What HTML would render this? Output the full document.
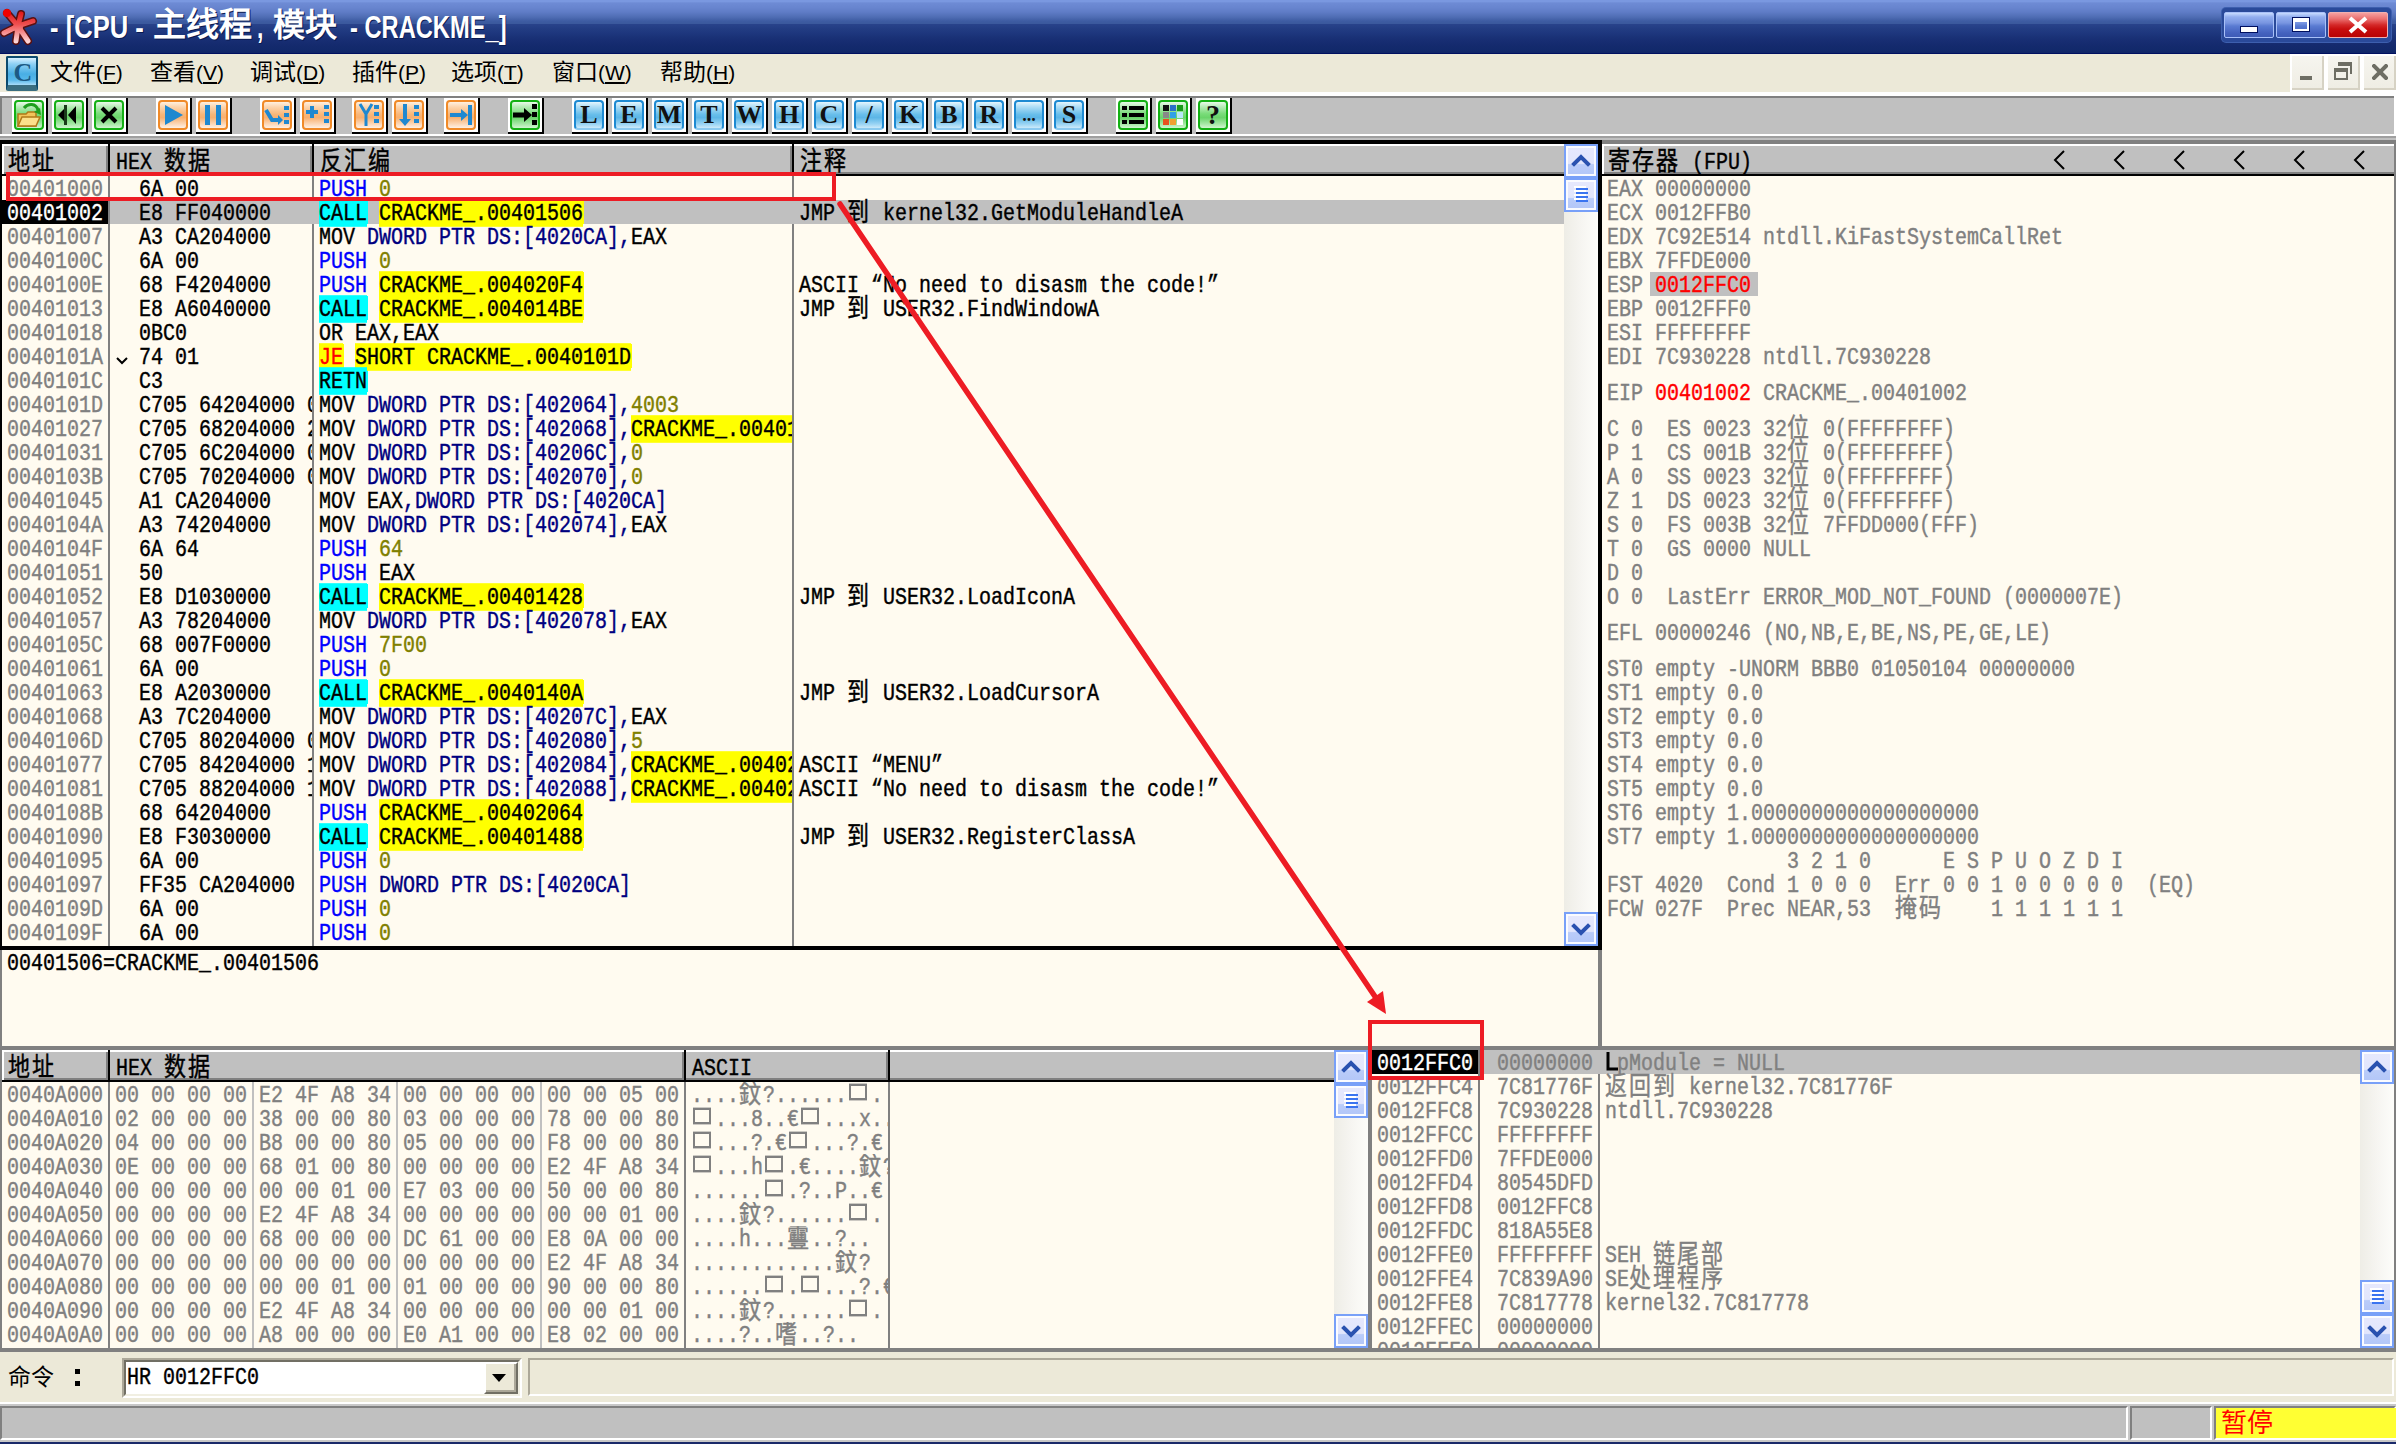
<!DOCTYPE html><html lang="zh-CN"><head><meta charset="utf-8"><title>OllyDbg CPU</title><style>
html,body{margin:0;padding:0}
body{width:2396px;height:1444px;overflow:hidden;position:relative;background:#ECE9D8;font-family:"Liberation Sans",sans-serif}
body div{position:absolute;box-sizing:border-box}
svg{display:block}
.t{font-family:"Liberation Mono",monospace;-webkit-text-stroke:0.35px currentColor;font-size:20px;line-height:24px;height:24px;white-space:pre;transform:scaleY(1.2);transform-origin:0 4px;color:#000;margin-left:-1px}
.c{font-size:22px;letter-spacing:2px;position:relative;top:1px}
.clip{overflow:hidden}
.sq{display:inline-block;width:18px;height:14px;border:2px solid currentColor;box-sizing:border-box;margin:2px 4px 0 2px;vertical-align:top}
.ui{font-family:"Liberation Sans",sans-serif;white-space:pre}
</style></head><body><div style="left:0px;top:0px;width:2396px;height:54px;background:linear-gradient(to bottom,#7A98E0 0px,#7A98E0 1.5px,#6E8BD5 3px,#6784CE 8px,#5F7CC6 12px,#4F6DB4 17px,#3E5CA2 21px,#3A589C 24px,#28428A 24.5px,#223C82 29px,#1E377E 33px,#1A3277 37px,#172D72 41px,#142A6D 46px,#12296B 50px,#102668 52.5px,#001060 53px,#001060 54px)"></div><div style="left:0px;top:0px;width:40px;height:50px"><svg width="40" height="50" viewBox="0 0 40 50">
<defs><linearGradient id="sg" gradientUnits="userSpaceOnUse" x1="0" y1="10" x2="0" y2="42"><stop offset="0" stop-color="#E01010"/><stop offset="0.45" stop-color="#F05050"/><stop offset="1" stop-color="#FFD8D8"/></linearGradient></defs>
<g stroke-linecap="round" fill="none">
<path d="M7 13 L18 26 M21 14 L18 26 M33 21 L18 26 M4 33 L18 26 M16 41 L18 26 M28 41 L18 26" stroke="#5A1010" stroke-width="8"/>
<path d="M7 13 L18 26 M21 14 L18 26 M33 21 L18 26 M4 33 L18 26 M16 41 L18 26 M28 41 L18 26" stroke="url(#sg)" stroke-width="5"/>
<circle cx="18" cy="27" r="5" fill="url(#sg)"/>
<circle cx="7" cy="13" r="4" fill="#F00000"/>
</g></svg></div><div class="ui" style="left:50px;top:7px;width:100px;height:40px"><span style="position:absolute;top:0;height:40px;line-height:40px;font-weight:bold;color:#fff;white-space:pre;text-shadow:1px 1px 0 #0A1A50;left:0;font-size:32px;transform:scaleX(0.8);transform-origin:0 0">- [CPU -</span></div><div class="ui" style="left:153px;top:5px;height:40px;height:40px;line-height:40px;font-weight:bold;color:#fff;white-space:pre;text-shadow:1px 1px 0 #0A1A50;font-size:32px"><span style="font-size:33px">主线程</span></div><div class="ui" style="left:257px;top:7px;width:20px;height:40px;overflow:visible"><span style="position:absolute;top:0;height:40px;line-height:40px;font-weight:bold;color:#fff;white-space:pre;text-shadow:1px 1px 0 #0A1A50;left:0;font-size:32px;transform:scaleX(0.72);transform-origin:0 0">,</span></div><div class="ui" style="left:273px;top:5px;height:40px;height:40px;line-height:40px;font-weight:bold;color:#fff;white-space:pre;text-shadow:1px 1px 0 #0A1A50;font-size:32px">模块</div><div class="ui" style="left:350px;top:7px;width:200px;height:40px"><span style="position:absolute;top:0;height:40px;line-height:40px;font-weight:bold;color:#fff;white-space:pre;text-shadow:1px 1px 0 #0A1A50;left:0;font-size:32px;transform:scaleX(0.74);transform-origin:0 0">- CRACKME_]</span></div><div style="left:2222px;top:8px;width:169px;height:34px;background:#2A4A9A;border-radius:4px;box-shadow:0 0 0 1px #3D5FAE"></div><div style="left:2224px;top:12px;width:50px;height:26px;background:linear-gradient(to bottom,#C8DCFF 0px,#92AEEF 4px,#7895E0 10px,#5A7BD2 13px,#4462BE 20px,#3B58B2 26px);border:1px solid #A8C0F8;border-radius:2px"></div><div style="left:2276px;top:12px;width:50px;height:26px;background:linear-gradient(to bottom,#C8DCFF 0px,#92AEEF 4px,#7895E0 10px,#5A7BD2 13px,#4462BE 20px,#3B58B2 26px);border:1px solid #A8C0F8;border-radius:2px"></div><div style="left:2328px;top:12px;width:60px;height:26px;background:linear-gradient(to bottom,#F7A0A0 0px,#EB6F6F 6px,#D42828 12px,#C80E0E 16px,#B40000 26px);border:1px solid #F0B0B0;border-radius:2px"></div><div style="left:2241px;top:27px;width:16px;height:5px;background:#fff;box-shadow:0 0 0 1px #001060"></div><div style="left:2293px;top:18px;width:16px;height:13px;border:2px solid #fff;border-top-width:4px;box-shadow:0 0 0 1px #001060"></div><div style="left:2346px;top:16px;width:24px;height:18px"><svg width="24" height="18" viewBox="0 0 24 18"><path d="M4 2 L20 16 M20 2 L4 16" stroke="#fff" stroke-width="4"/></svg></div><div style="left:0px;top:54px;width:2396px;height:38px;background:#ECE9D8"></div><div style="left:0px;top:92px;width:2396px;height:4px;background:#fff"></div><div style="left:6px;top:56px;width:32px;height:35px;background:linear-gradient(to bottom,#D8F0FF 0,#8ED0F4 6px,#48AEE4 16px,#58B8EA 22px,#A8DCF8 27px);border:2px solid #0B4A6E;border-bottom:6px solid #3A6E80;border-radius:2px"></div><div class="ui" style="left:12px;top:58px;width:22px;height:30px;font-size:26px;line-height:30px;font-weight:bold;color:#1C5A84;text-align:center;font-family:'Liberation Serif',serif">C</div><div class="ui" style="left:50px;top:58px;height:28px;line-height:28px;font-size:24px;color:#000"><span style="font-size:23px">文件</span><span style="font-family:'Liberation Sans',sans-serif;font-size:21px">(<u>F</u>)</span></div><div class="ui" style="left:150px;top:58px;height:28px;line-height:28px;font-size:24px;color:#000"><span style="font-size:23px">查看</span><span style="font-family:'Liberation Sans',sans-serif;font-size:21px">(<u>V</u>)</span></div><div class="ui" style="left:250px;top:58px;height:28px;line-height:28px;font-size:24px;color:#000"><span style="font-size:23px">调试</span><span style="font-family:'Liberation Sans',sans-serif;font-size:21px">(<u>D</u>)</span></div><div class="ui" style="left:352px;top:58px;height:28px;line-height:28px;font-size:24px;color:#000"><span style="font-size:23px">插件</span><span style="font-family:'Liberation Sans',sans-serif;font-size:21px">(<u>P</u>)</span></div><div class="ui" style="left:451px;top:58px;height:28px;line-height:28px;font-size:24px;color:#000"><span style="font-size:23px">选项</span><span style="font-family:'Liberation Sans',sans-serif;font-size:21px">(<u>T</u>)</span></div><div class="ui" style="left:552px;top:58px;height:28px;line-height:28px;font-size:24px;color:#000"><span style="font-size:23px">窗口</span><span style="font-family:'Liberation Sans',sans-serif;font-size:21px">(<u>W</u>)</span></div><div class="ui" style="left:660px;top:58px;height:28px;line-height:28px;font-size:24px;color:#000"><span style="font-size:23px">帮助</span><span style="font-family:'Liberation Sans',sans-serif;font-size:21px">(<u>H</u>)</span></div><div style="left:2290px;top:54px;width:106px;height:38px;background:#fff"></div><div style="left:2292px;top:56px;width:32px;height:34px;background:linear-gradient(to bottom,#F6F5EF,#EFEDE4);border-right:2px solid #D6D2C4;border-bottom:2px solid #D6D2C4"></div><div style="left:2328px;top:56px;width:32px;height:34px;background:linear-gradient(to bottom,#F6F5EF,#EFEDE4);border-right:2px solid #D6D2C4;border-bottom:2px solid #D6D2C4"></div><div style="left:2364px;top:56px;width:32px;height:34px;background:linear-gradient(to bottom,#F6F5EF,#EFEDE4);border-right:2px solid #D6D2C4;border-bottom:2px solid #D6D2C4"></div><div style="left:2300px;top:76px;width:12px;height:4px;background:#6E6E64"></div><div style="left:2334px;top:62px;width:20px;height:20px"><svg width="20" height="20" viewBox="0 0 20 20"><g fill="#6E6E64"><rect x="4" y="0" width="14" height="4"/><rect x="16" y="0" width="2" height="12"/><rect x="0" y="6" width="14" height="4"/><rect x="0" y="6" width="2" height="12"/><rect x="12" y="6" width="2" height="12"/><rect x="0" y="16" width="14" height="2"/></g></svg></div><div style="left:2372px;top:64px;width:16px;height:16px"><svg width="16" height="16" viewBox="0 0 16 16"><path d="M2 2 L14 14 M14 2 L2 14" stroke="#6E6E64" stroke-width="4" stroke-linecap="square"/></svg></div><div style="left:0px;top:96px;width:2396px;height:2px;background:#808080"></div><div style="left:0px;top:98px;width:2396px;height:36px;background:#C0C0C0"></div><div style="left:0px;top:98px;width:2px;height:38px;background:#808080"></div><div style="left:2394px;top:96px;width:2px;height:40px;background:#fff"></div><div style="left:0px;top:134px;width:2396px;height:2px;background:#fff"></div><div style="left:0px;top:136px;width:2396px;height:2px;background:#A0A0A0"></div><div style="left:0px;top:138px;width:2396px;height:2px;background:#C0C0C0"></div><div style="left:12px;top:98px;width:36px;height:36px;background:#fff;border-right:2px solid #000;border-bottom:2px solid #000"></div><div style="left:14px;top:100px;width:30px;height:30px;background:linear-gradient(to bottom,#E8FAE8 0,#B8ECB8 18%,#7ADC7A 45%,#6AD46A 60%,#A8E8A8 85%,#D0F6D0 100%);border:2px solid #14B014;border-radius:4px"></div><div style="left:14px;top:100px;width:30px;height:30px"><svg width="30" height="30" viewBox="0 0 30 30"><path d="M4 14 H12 L14 12 H22 V26 H4 Z" fill="#F2C45A" stroke="#B07818" stroke-width="1.5"/><path d="M4 26 L8 17 H26 L22 26 Z" fill="#FBE08A" stroke="#B07818" stroke-width="1.5"/><path d="M10 8 C14 3 22 3 24 10" fill="none" stroke="#1E9E1E" stroke-width="3"/><path d="M20 12 L26 8 L27 15 Z" fill="#1E9E1E"/></svg></div><div style="left:52px;top:98px;width:36px;height:36px;background:#fff;border-right:2px solid #000;border-bottom:2px solid #000"></div><div style="left:54px;top:100px;width:30px;height:30px;background:linear-gradient(to bottom,#E8FAE8 0,#B8ECB8 18%,#7ADC7A 45%,#6AD46A 60%,#A8E8A8 85%,#D0F6D0 100%);border:2px solid #14B014;border-radius:4px"></div><div style="left:54px;top:100px;width:30px;height:30px"><svg width="30" height="30" viewBox="0 0 30 30"><path d="M4 15 L12 7 V23 Z M14 15 L22 6 V24 Z" fill="#000"/><rect x="10" y="5" width="3" height="20" fill="#1A3A1A"/></svg></div><div style="left:92px;top:98px;width:36px;height:36px;background:#fff;border-right:2px solid #000;border-bottom:2px solid #000"></div><div style="left:94px;top:100px;width:30px;height:30px;background:linear-gradient(to bottom,#E8FAE8 0,#B8ECB8 18%,#7ADC7A 45%,#6AD46A 60%,#A8E8A8 85%,#D0F6D0 100%);border:2px solid #14B014;border-radius:4px"></div><div style="left:94px;top:100px;width:30px;height:30px"><svg width="30" height="30" viewBox="0 0 30 30"><path d="M8 8 L22 22 M22 8 L8 22" stroke="#000" stroke-width="4"/></svg></div><div style="left:156px;top:98px;width:36px;height:36px;background:#fff;border-right:2px solid #000;border-bottom:2px solid #000"></div><div style="left:158px;top:100px;width:30px;height:30px;background:linear-gradient(to bottom,#FFF0E0 0,#FCD4AC 20%,#F8B678 48%,#F8B070 60%,#FCD8B8 85%,#FFF0E4 100%);border:2px solid #F08A28;border-radius:4px"></div><div style="left:158px;top:100px;width:30px;height:30px"><svg width="30" height="30" viewBox="0 0 30 30"><path d="M7 5 L25 15 L7 25 Z" fill="#1F88D0"/></svg></div><div style="left:196px;top:98px;width:36px;height:36px;background:#fff;border-right:2px solid #000;border-bottom:2px solid #000"></div><div style="left:198px;top:100px;width:30px;height:30px;background:linear-gradient(to bottom,#FFF0E0 0,#FCD4AC 20%,#F8B678 48%,#F8B070 60%,#FCD8B8 85%,#FFF0E4 100%);border:2px solid #F08A28;border-radius:4px"></div><div style="left:198px;top:100px;width:30px;height:30px"><svg width="30" height="30" viewBox="0 0 30 30"><rect x="7" y="5" width="5" height="20" fill="#1F88D0"/><rect x="18" y="5" width="5" height="20" fill="#1F88D0"/></svg></div><div style="left:260px;top:98px;width:36px;height:36px;background:#fff;border-right:2px solid #000;border-bottom:2px solid #000"></div><div style="left:262px;top:100px;width:30px;height:30px;background:linear-gradient(to bottom,#FFF0E0 0,#FCD4AC 20%,#F8B678 48%,#F8B070 60%,#FCD8B8 85%,#FFF0E4 100%);border:2px solid #F08A28;border-radius:4px"></div><div style="left:262px;top:100px;width:30px;height:30px"><svg width="30" height="30" viewBox="0 0 30 30"><path d="M4 10 L10 20 H18" fill="none" stroke="#1F88D0" stroke-width="4"/><path d="M16 15 L21 20 L16 25 Z" fill="#1F88D0"/><rect x="22" y="6" width="5" height="4" fill="#1F88D0"/><rect x="22" y="13" width="5" height="4" fill="#1F88D0"/><rect x="22" y="20" width="5" height="4" fill="#1F88D0"/></svg></div><div style="left:300px;top:98px;width:36px;height:36px;background:#fff;border-right:2px solid #000;border-bottom:2px solid #000"></div><div style="left:302px;top:100px;width:30px;height:30px;background:linear-gradient(to bottom,#FFF0E0 0,#FCD4AC 20%,#F8B678 48%,#F8B070 60%,#FCD8B8 85%,#FFF0E4 100%);border:2px solid #F08A28;border-radius:4px"></div><div style="left:302px;top:100px;width:30px;height:30px"><svg width="30" height="30" viewBox="0 0 30 30"><path d="M4 12 H16 M10 6 V18" fill="none" stroke="#1F88D0" stroke-width="4"/><rect x="22" y="5" width="5" height="4" fill="#1F88D0"/><rect x="22" y="12" width="5" height="4" fill="#1F88D0"/><rect x="22" y="19" width="5" height="4" fill="#1F88D0"/></svg></div><div style="left:352px;top:98px;width:36px;height:36px;background:#fff;border-right:2px solid #000;border-bottom:2px solid #000"></div><div style="left:354px;top:100px;width:30px;height:30px;background:linear-gradient(to bottom,#FFF0E0 0,#FCD4AC 20%,#F8B678 48%,#F8B070 60%,#FCD8B8 85%,#FFF0E4 100%);border:2px solid #F08A28;border-radius:4px"></div><div style="left:354px;top:100px;width:30px;height:30px"><svg width="30" height="30" viewBox="0 0 30 30"><path d="M6 4 L12 14 V26 M12 14 L18 4" fill="none" stroke="#1F88D0" stroke-width="3"/><rect x="20" y="5" width="5" height="4" fill="#1F88D0"/><rect x="20" y="12" width="5" height="4" fill="#1F88D0"/><rect x="20" y="19" width="5" height="4" fill="#1F88D0"/></svg></div><div style="left:392px;top:98px;width:36px;height:36px;background:#fff;border-right:2px solid #000;border-bottom:2px solid #000"></div><div style="left:394px;top:100px;width:30px;height:30px;background:linear-gradient(to bottom,#FFF0E0 0,#FCD4AC 20%,#F8B678 48%,#F8B070 60%,#FCD8B8 85%,#FFF0E4 100%);border:2px solid #F08A28;border-radius:4px"></div><div style="left:394px;top:100px;width:30px;height:30px"><svg width="30" height="30" viewBox="0 0 30 30"><path d="M11 4 V22" stroke="#1F88D0" stroke-width="4"/><path d="M5 19 L11 26 L17 19 Z" fill="#1F88D0"/><rect x="20" y="5" width="5" height="4" fill="#1F88D0"/><rect x="20" y="12" width="5" height="4" fill="#1F88D0"/><rect x="20" y="19" width="5" height="4" fill="#1F88D0"/></svg></div><div style="left:444px;top:98px;width:36px;height:36px;background:#fff;border-right:2px solid #000;border-bottom:2px solid #000"></div><div style="left:446px;top:100px;width:30px;height:30px;background:linear-gradient(to bottom,#FFF0E0 0,#FCD4AC 20%,#F8B678 48%,#F8B070 60%,#FCD8B8 85%,#FFF0E4 100%);border:2px solid #F08A28;border-radius:4px"></div><div style="left:446px;top:100px;width:30px;height:30px"><svg width="30" height="30" viewBox="0 0 30 30"><path d="M4 15 H18" stroke="#1F88D0" stroke-width="4"/><path d="M15 9 L22 15 L15 21 Z" fill="#1F88D0"/><rect x="22" y="5" width="4" height="20" fill="#1F88D0"/></svg></div><div style="left:508px;top:98px;width:36px;height:36px;background:#fff;border-right:2px solid #000;border-bottom:2px solid #000"></div><div style="left:510px;top:100px;width:30px;height:30px;background:linear-gradient(to bottom,#E8FAE8 0,#B8ECB8 18%,#7ADC7A 45%,#6AD46A 60%,#A8E8A8 85%,#D0F6D0 100%);border:2px solid #14B014;border-radius:4px"></div><div style="left:510px;top:100px;width:30px;height:30px"><svg width="30" height="30" viewBox="0 0 30 30"><path d="M3 15 H16" stroke="#000" stroke-width="5"/><path d="M14 8 L22 15 L14 22 Z" fill="#000"/><rect x="22" y="4" width="5" height="5" fill="#000"/><rect x="22" y="12" width="5" height="5" fill="#000"/><rect x="22" y="20" width="5" height="5" fill="#000"/></svg></div><div style="left:572px;top:98px;width:36px;height:36px;background:#fff;border-right:2px solid #000;border-bottom:2px solid #000"></div><div style="left:574px;top:100px;width:30px;height:30px;background:linear-gradient(to bottom,#E4F6FE 0,#B0DEF6 18%,#68BEEA 48%,#5CB6E6 60%,#9AD4F4 85%,#CCEAFA 100%);border:2px solid #1E8AD2;border-bottom-color:#8CCAF0;border-radius:4px"></div><div style="left:574px;top:100px;width:30px;height:30px"><div style="position:absolute;left:0;top:0;width:30px;height:30px;text-align:center;font-family:'Liberation Serif',serif;font-weight:bold;font-size:26px;line-height:30px;color:#111">L</div></div><div style="left:612px;top:98px;width:36px;height:36px;background:#fff;border-right:2px solid #000;border-bottom:2px solid #000"></div><div style="left:614px;top:100px;width:30px;height:30px;background:linear-gradient(to bottom,#E4F6FE 0,#B0DEF6 18%,#68BEEA 48%,#5CB6E6 60%,#9AD4F4 85%,#CCEAFA 100%);border:2px solid #1E8AD2;border-bottom-color:#8CCAF0;border-radius:4px"></div><div style="left:614px;top:100px;width:30px;height:30px"><div style="position:absolute;left:0;top:0;width:30px;height:30px;text-align:center;font-family:'Liberation Serif',serif;font-weight:bold;font-size:26px;line-height:30px;color:#111">E</div></div><div style="left:652px;top:98px;width:36px;height:36px;background:#fff;border-right:2px solid #000;border-bottom:2px solid #000"></div><div style="left:654px;top:100px;width:30px;height:30px;background:linear-gradient(to bottom,#E4F6FE 0,#B0DEF6 18%,#68BEEA 48%,#5CB6E6 60%,#9AD4F4 85%,#CCEAFA 100%);border:2px solid #1E8AD2;border-bottom-color:#8CCAF0;border-radius:4px"></div><div style="left:654px;top:100px;width:30px;height:30px"><div style="position:absolute;left:0;top:0;width:30px;height:30px;text-align:center;font-family:'Liberation Serif',serif;font-weight:bold;font-size:26px;line-height:30px;color:#111">M</div></div><div style="left:692px;top:98px;width:36px;height:36px;background:#fff;border-right:2px solid #000;border-bottom:2px solid #000"></div><div style="left:694px;top:100px;width:30px;height:30px;background:linear-gradient(to bottom,#E4F6FE 0,#B0DEF6 18%,#68BEEA 48%,#5CB6E6 60%,#9AD4F4 85%,#CCEAFA 100%);border:2px solid #1E8AD2;border-bottom-color:#8CCAF0;border-radius:4px"></div><div style="left:694px;top:100px;width:30px;height:30px"><div style="position:absolute;left:0;top:0;width:30px;height:30px;text-align:center;font-family:'Liberation Serif',serif;font-weight:bold;font-size:26px;line-height:30px;color:#111">T</div></div><div style="left:732px;top:98px;width:36px;height:36px;background:#fff;border-right:2px solid #000;border-bottom:2px solid #000"></div><div style="left:734px;top:100px;width:30px;height:30px;background:linear-gradient(to bottom,#E4F6FE 0,#B0DEF6 18%,#68BEEA 48%,#5CB6E6 60%,#9AD4F4 85%,#CCEAFA 100%);border:2px solid #1E8AD2;border-bottom-color:#8CCAF0;border-radius:4px"></div><div style="left:734px;top:100px;width:30px;height:30px"><div style="position:absolute;left:0;top:0;width:30px;height:30px;text-align:center;font-family:'Liberation Serif',serif;font-weight:bold;font-size:26px;line-height:30px;color:#111">W</div></div><div style="left:772px;top:98px;width:36px;height:36px;background:#fff;border-right:2px solid #000;border-bottom:2px solid #000"></div><div style="left:774px;top:100px;width:30px;height:30px;background:linear-gradient(to bottom,#E4F6FE 0,#B0DEF6 18%,#68BEEA 48%,#5CB6E6 60%,#9AD4F4 85%,#CCEAFA 100%);border:2px solid #1E8AD2;border-bottom-color:#8CCAF0;border-radius:4px"></div><div style="left:774px;top:100px;width:30px;height:30px"><div style="position:absolute;left:0;top:0;width:30px;height:30px;text-align:center;font-family:'Liberation Serif',serif;font-weight:bold;font-size:26px;line-height:30px;color:#111">H</div></div><div style="left:812px;top:98px;width:36px;height:36px;background:#fff;border-right:2px solid #000;border-bottom:2px solid #000"></div><div style="left:814px;top:100px;width:30px;height:30px;background:linear-gradient(to bottom,#E4F6FE 0,#B0DEF6 18%,#68BEEA 48%,#5CB6E6 60%,#9AD4F4 85%,#CCEAFA 100%);border:2px solid #1E8AD2;border-bottom-color:#8CCAF0;border-radius:4px"></div><div style="left:814px;top:100px;width:30px;height:30px"><div style="position:absolute;left:0;top:0;width:30px;height:30px;text-align:center;font-family:'Liberation Serif',serif;font-weight:bold;font-size:26px;line-height:30px;color:#111">C</div></div><div style="left:852px;top:98px;width:36px;height:36px;background:#fff;border-right:2px solid #000;border-bottom:2px solid #000"></div><div style="left:854px;top:100px;width:30px;height:30px;background:linear-gradient(to bottom,#E4F6FE 0,#B0DEF6 18%,#68BEEA 48%,#5CB6E6 60%,#9AD4F4 85%,#CCEAFA 100%);border:2px solid #1E8AD2;border-bottom-color:#8CCAF0;border-radius:4px"></div><div style="left:854px;top:100px;width:30px;height:30px"><div style="position:absolute;left:0;top:0;width:30px;height:30px;text-align:center;font-family:'Liberation Serif',serif;font-weight:bold;font-size:26px;line-height:30px;color:#111">/</div></div><div style="left:892px;top:98px;width:36px;height:36px;background:#fff;border-right:2px solid #000;border-bottom:2px solid #000"></div><div style="left:894px;top:100px;width:30px;height:30px;background:linear-gradient(to bottom,#E4F6FE 0,#B0DEF6 18%,#68BEEA 48%,#5CB6E6 60%,#9AD4F4 85%,#CCEAFA 100%);border:2px solid #1E8AD2;border-bottom-color:#8CCAF0;border-radius:4px"></div><div style="left:894px;top:100px;width:30px;height:30px"><div style="position:absolute;left:0;top:0;width:30px;height:30px;text-align:center;font-family:'Liberation Serif',serif;font-weight:bold;font-size:26px;line-height:30px;color:#111">K</div></div><div style="left:932px;top:98px;width:36px;height:36px;background:#fff;border-right:2px solid #000;border-bottom:2px solid #000"></div><div style="left:934px;top:100px;width:30px;height:30px;background:linear-gradient(to bottom,#E4F6FE 0,#B0DEF6 18%,#68BEEA 48%,#5CB6E6 60%,#9AD4F4 85%,#CCEAFA 100%);border:2px solid #1E8AD2;border-bottom-color:#8CCAF0;border-radius:4px"></div><div style="left:934px;top:100px;width:30px;height:30px"><div style="position:absolute;left:0;top:0;width:30px;height:30px;text-align:center;font-family:'Liberation Serif',serif;font-weight:bold;font-size:26px;line-height:30px;color:#111">B</div></div><div style="left:972px;top:98px;width:36px;height:36px;background:#fff;border-right:2px solid #000;border-bottom:2px solid #000"></div><div style="left:974px;top:100px;width:30px;height:30px;background:linear-gradient(to bottom,#E4F6FE 0,#B0DEF6 18%,#68BEEA 48%,#5CB6E6 60%,#9AD4F4 85%,#CCEAFA 100%);border:2px solid #1E8AD2;border-bottom-color:#8CCAF0;border-radius:4px"></div><div style="left:974px;top:100px;width:30px;height:30px"><div style="position:absolute;left:0;top:0;width:30px;height:30px;text-align:center;font-family:'Liberation Serif',serif;font-weight:bold;font-size:26px;line-height:30px;color:#111">R</div></div><div style="left:1012px;top:98px;width:36px;height:36px;background:#fff;border-right:2px solid #000;border-bottom:2px solid #000"></div><div style="left:1014px;top:100px;width:30px;height:30px;background:linear-gradient(to bottom,#E4F6FE 0,#B0DEF6 18%,#68BEEA 48%,#5CB6E6 60%,#9AD4F4 85%,#CCEAFA 100%);border:2px solid #1E8AD2;border-bottom-color:#8CCAF0;border-radius:4px"></div><div style="left:1014px;top:100px;width:30px;height:30px"><div style="position:absolute;left:0;top:0;width:30px;height:30px;text-align:center;font-family:'Liberation Serif',serif;font-weight:bold;font-size:18px;line-height:30px;color:#111">...</div></div><div style="left:1052px;top:98px;width:36px;height:36px;background:#fff;border-right:2px solid #000;border-bottom:2px solid #000"></div><div style="left:1054px;top:100px;width:30px;height:30px;background:linear-gradient(to bottom,#E4F6FE 0,#B0DEF6 18%,#68BEEA 48%,#5CB6E6 60%,#9AD4F4 85%,#CCEAFA 100%);border:2px solid #1E8AD2;border-bottom-color:#8CCAF0;border-radius:4px"></div><div style="left:1054px;top:100px;width:30px;height:30px"><div style="position:absolute;left:0;top:0;width:30px;height:30px;text-align:center;font-family:'Liberation Serif',serif;font-weight:bold;font-size:26px;line-height:30px;color:#111">S</div></div><div style="left:1116px;top:98px;width:36px;height:36px;background:#fff;border-right:2px solid #000;border-bottom:2px solid #000"></div><div style="left:1118px;top:100px;width:30px;height:30px;background:linear-gradient(to bottom,#E8FAE8 0,#B8ECB8 18%,#7ADC7A 45%,#6AD46A 60%,#A8E8A8 85%,#D0F6D0 100%);border:2px solid #14B014;border-radius:4px"></div><div style="left:1118px;top:100px;width:30px;height:30px"><svg width="30" height="30" viewBox="0 0 30 30"><rect x="4" y="6" width="5" height="4" fill="#000"/><rect x="11" y="6" width="15" height="4" fill="#000"/><rect x="4" y="13" width="5" height="4" fill="#000"/><rect x="11" y="13" width="15" height="4" fill="#000"/><rect x="4" y="20" width="5" height="4" fill="#000"/><rect x="11" y="20" width="15" height="4" fill="#000"/></svg></div><div style="left:1156px;top:98px;width:36px;height:36px;background:#fff;border-right:2px solid #000;border-bottom:2px solid #000"></div><div style="left:1158px;top:100px;width:30px;height:30px;background:linear-gradient(to bottom,#E8FAE8 0,#B8ECB8 18%,#7ADC7A 45%,#6AD46A 60%,#A8E8A8 85%,#D0F6D0 100%);border:2px solid #14B014;border-radius:4px"></div><div style="left:1158px;top:100px;width:30px;height:30px"><svg width="30" height="30" viewBox="0 0 30 30"><rect x="5" y="5" width="6" height="6" fill="#111"/><rect x="12" y="5" width="6" height="6" fill="#2A70C8"/><rect x="19" y="5" width="6" height="6" fill="#1A9A1A"/><rect x="5" y="12" width="6" height="6" fill="#888"/><rect x="12" y="12" width="6" height="6" fill="#30A0E8"/><rect x="19" y="12" width="6" height="6" fill="#B8E8F8"/><rect x="5" y="19" width="6" height="6" fill="#E85020"/><rect x="12" y="19" width="6" height="6" fill="#F0A030"/><rect x="19" y="19" width="6" height="6" fill="#fff"/></svg></div><div style="left:1196px;top:98px;width:36px;height:36px;background:#fff;border-right:2px solid #000;border-bottom:2px solid #000"></div><div style="left:1198px;top:100px;width:30px;height:30px;background:linear-gradient(to bottom,#E8FAE8 0,#B8ECB8 18%,#7ADC7A 45%,#6AD46A 60%,#A8E8A8 85%,#D0F6D0 100%);border:2px solid #14B014;border-radius:4px"></div><div style="left:1198px;top:100px;width:30px;height:30px"><div style="position:absolute;left:0;top:0;width:30px;height:30px;text-align:center;font-family:'Liberation Serif',serif;font-weight:bold;font-size:28px;line-height:30px;color:#111">?</div></div><div style="left:0px;top:140px;width:2396px;height:1212px;background:#FFFBF0"></div><div style="left:0px;top:140px;width:1602px;height:4px;background:#000"></div><div style="left:0px;top:140px;width:2px;height:810px;background:#000"></div><div style="left:1598px;top:140px;width:4px;height:810px;background:#000"></div><div style="left:0px;top:946px;width:1602px;height:4px;background:#000"></div><div style="left:2px;top:144px;width:1562px;height:32px;background:#C0C0C0"></div><div style="left:2px;top:144px;width:1562px;height:2px;background:#fff"></div><div style="left:2px;top:172px;width:1562px;height:2px;background:#808080"></div><div style="left:2px;top:174px;width:1562px;height:2px;background:#000"></div><div style="left:2px;top:144px;width:2px;height:30px;background:#fff"></div><div class="t" style="left:9px;top:149px"><span class="c">地址</span></div><div style="left:106px;top:146px;width:2px;height:28px;background:#808080"></div><div style="left:108px;top:144px;width:2px;height:32px;background:#000"></div><div class="t" style="left:117px;top:149px">HEX <span class="c">数据</span></div><div style="left:310px;top:146px;width:2px;height:28px;background:#808080"></div><div style="left:312px;top:144px;width:2px;height:32px;background:#000"></div><div class="t" style="left:321px;top:149px"><span class="c">反汇编</span></div><div style="left:790px;top:146px;width:2px;height:28px;background:#808080"></div><div style="left:792px;top:144px;width:2px;height:32px;background:#000"></div><div class="t" style="left:801px;top:149px"><span class="c">注释</span></div><div style="left:108px;top:176px;width:2px;height:770px;background:#808080"></div><div style="left:312px;top:176px;width:2px;height:770px;background:#808080"></div><div style="left:792px;top:176px;width:2px;height:770px;background:#808080"></div><div style="left:1564px;top:144px;width:34px;height:802px;background:linear-gradient(to right,#EEEDE6 0,#F6F5F1 50%,#FDFDFA 100%)"></div><div style="left:1564px;top:144px;width:34px;height:34px;background:linear-gradient(to bottom,#E6E8FD 0,#E2E6FC 58%,#BACCF9 62%,#B2C6F8 100%);border:2px solid #78A0F8;box-shadow:inset 0 0 0 2px #FAFBFF"></div><div style="left:1570px;top:152px;width:22px;height:17px"><svg width="22" height="17" viewBox="0 0 22 17"><path d="M4 12 L11 5 L18 12" fill="none" stroke="#2A52B0" stroke-width="4" stroke-linecap="square"/></svg></div><div style="left:1564px;top:178px;width:34px;height:34px;background:linear-gradient(to bottom,#E6E8FD 0,#E2E6FC 58%,#BACCF9 62%,#B2C6F8 100%);border:2px solid #78A0F8;box-shadow:inset 0 0 0 2px #FAFBFF"></div><div style="left:1574px;top:186px;width:14px;height:16px"><svg width="14" height="16" viewBox="0 0 14 16"><rect x="0" y="0" width="12" height="2" fill="#fff"/><rect x="2" y="2" width="12" height="2" fill="#3A74F0"/><rect x="0" y="4" width="12" height="2" fill="#fff"/><rect x="2" y="6" width="12" height="2" fill="#3A74F0"/><rect x="0" y="8" width="12" height="2" fill="#fff"/><rect x="2" y="10" width="12" height="2" fill="#3A74F0"/><rect x="0" y="12" width="12" height="2" fill="#fff"/><rect x="2" y="14" width="12" height="2" fill="#3A74F0"/></svg></div><div style="left:1564px;top:912px;width:34px;height:34px;background:linear-gradient(to bottom,#E6E8FD 0,#E2E6FC 58%,#BACCF9 62%,#B2C6F8 100%);border:2px solid #78A0F8;box-shadow:inset 0 0 0 2px #FAFBFF"></div><div style="left:1570px;top:921px;width:22px;height:17px"><svg width="22" height="17" viewBox="0 0 22 17"><path d="M4 5 L11 12 L18 5" fill="none" stroke="#2A52B0" stroke-width="4" stroke-linecap="square"/></svg></div><div style="left:110px;top:200px;width:1454px;height:24px;background:#C0C0C0"></div><div style="left:2px;top:200px;width:106px;height:24px;background:#000"></div><div class="clip" style="left:2px;top:176px;width:106px;height:770px"><div class="t" style="left:6px;top:0px"><span style="color:#808080;">00401000</span></div><div class="t" style="left:6px;top:24px"><span style="color:#fff;">00401002</span></div><div class="t" style="left:6px;top:48px"><span style="color:#808080;">00401007</span></div><div class="t" style="left:6px;top:72px"><span style="color:#808080;">0040100C</span></div><div class="t" style="left:6px;top:96px"><span style="color:#808080;">0040100E</span></div><div class="t" style="left:6px;top:120px"><span style="color:#808080;">00401013</span></div><div class="t" style="left:6px;top:144px"><span style="color:#808080;">00401018</span></div><div class="t" style="left:6px;top:168px"><span style="color:#808080;">0040101A</span></div><div class="t" style="left:6px;top:192px"><span style="color:#808080;">0040101C</span></div><div class="t" style="left:6px;top:216px"><span style="color:#808080;">0040101D</span></div><div class="t" style="left:6px;top:240px"><span style="color:#808080;">00401027</span></div><div class="t" style="left:6px;top:264px"><span style="color:#808080;">00401031</span></div><div class="t" style="left:6px;top:288px"><span style="color:#808080;">0040103B</span></div><div class="t" style="left:6px;top:312px"><span style="color:#808080;">00401045</span></div><div class="t" style="left:6px;top:336px"><span style="color:#808080;">0040104A</span></div><div class="t" style="left:6px;top:360px"><span style="color:#808080;">0040104F</span></div><div class="t" style="left:6px;top:384px"><span style="color:#808080;">00401051</span></div><div class="t" style="left:6px;top:408px"><span style="color:#808080;">00401052</span></div><div class="t" style="left:6px;top:432px"><span style="color:#808080;">00401057</span></div><div class="t" style="left:6px;top:456px"><span style="color:#808080;">0040105C</span></div><div class="t" style="left:6px;top:480px"><span style="color:#808080;">00401061</span></div><div class="t" style="left:6px;top:504px"><span style="color:#808080;">00401063</span></div><div class="t" style="left:6px;top:528px"><span style="color:#808080;">00401068</span></div><div class="t" style="left:6px;top:552px"><span style="color:#808080;">0040106D</span></div><div class="t" style="left:6px;top:576px"><span style="color:#808080;">00401077</span></div><div class="t" style="left:6px;top:600px"><span style="color:#808080;">00401081</span></div><div class="t" style="left:6px;top:624px"><span style="color:#808080;">0040108B</span></div><div class="t" style="left:6px;top:648px"><span style="color:#808080;">00401090</span></div><div class="t" style="left:6px;top:672px"><span style="color:#808080;">00401095</span></div><div class="t" style="left:6px;top:696px"><span style="color:#808080;">00401097</span></div><div class="t" style="left:6px;top:720px"><span style="color:#808080;">0040109D</span></div><div class="t" style="left:6px;top:744px"><span style="color:#808080;">0040109F</span></div></div><div class="clip" style="left:110px;top:176px;width:202px;height:770px"><div class="t" style="left:6px;top:0px"><span style="color:#000;">  6A 00</span></div><div class="t" style="left:6px;top:24px"><span style="color:#000;">  E8 FF040000</span></div><div class="t" style="left:6px;top:48px"><span style="color:#000;">  A3 CA204000</span></div><div class="t" style="left:6px;top:72px"><span style="color:#000;">  6A 00</span></div><div class="t" style="left:6px;top:96px"><span style="color:#000;">  68 F4204000</span></div><div class="t" style="left:6px;top:120px"><span style="color:#000;">  E8 A6040000</span></div><div class="t" style="left:6px;top:144px"><span style="color:#000;">  0BC0</span></div><div class="t" style="left:6px;top:168px"><span style="color:#000;">  74 01</span></div><div style="left:6px;top:181px;width:12px;height:8px"><svg width="12" height="8" viewBox="0 0 12 8"><path d="M1 1 L6 6 L11 1" fill="none" stroke="#000" stroke-width="2"/></svg></div><div class="t" style="left:6px;top:192px"><span style="color:#000;">  C3</span></div><div class="t" style="left:6px;top:216px"><span style="color:#000;">  C705 64204000 03</span></div><div class="t" style="left:6px;top:240px"><span style="color:#000;">  C705 68204000 24</span></div><div class="t" style="left:6px;top:264px"><span style="color:#000;">  C705 6C204000 00</span></div><div class="t" style="left:6px;top:288px"><span style="color:#000;">  C705 70204000 00</span></div><div class="t" style="left:6px;top:312px"><span style="color:#000;">  A1 CA204000</span></div><div class="t" style="left:6px;top:336px"><span style="color:#000;">  A3 74204000</span></div><div class="t" style="left:6px;top:360px"><span style="color:#000;">  6A 64</span></div><div class="t" style="left:6px;top:384px"><span style="color:#000;">  50</span></div><div class="t" style="left:6px;top:408px"><span style="color:#000;">  E8 D1030000</span></div><div class="t" style="left:6px;top:432px"><span style="color:#000;">  A3 78204000</span></div><div class="t" style="left:6px;top:456px"><span style="color:#000;">  68 007F0000</span></div><div class="t" style="left:6px;top:480px"><span style="color:#000;">  6A 00</span></div><div class="t" style="left:6px;top:504px"><span style="color:#000;">  E8 A2030000</span></div><div class="t" style="left:6px;top:528px"><span style="color:#000;">  A3 7C204000</span></div><div class="t" style="left:6px;top:552px"><span style="color:#000;">  C705 80204000 05</span></div><div class="t" style="left:6px;top:576px"><span style="color:#000;">  C705 84204000 1F</span></div><div class="t" style="left:6px;top:600px"><span style="color:#000;">  C705 88204000 1F</span></div><div class="t" style="left:6px;top:624px"><span style="color:#000;">  68 64204000</span></div><div class="t" style="left:6px;top:648px"><span style="color:#000;">  E8 F3030000</span></div><div class="t" style="left:6px;top:672px"><span style="color:#000;">  6A 00</span></div><div class="t" style="left:6px;top:696px"><span style="color:#000;">  FF35 CA204000</span></div><div class="t" style="left:6px;top:720px"><span style="color:#000;">  6A 00</span></div><div class="t" style="left:6px;top:744px"><span style="color:#000;">  6A 00</span></div></div><div class="clip" style="left:314px;top:176px;width:478px;height:770px"><div style="left:6px;top:24px;width:48px;height:24px;background:#00FFFF"></div><div style="left:66px;top:24px;width:204px;height:24px;background:#FFFF00"></div><div style="left:66px;top:96px;width:204px;height:24px;background:#FFFF00"></div><div style="left:6px;top:120px;width:48px;height:24px;background:#00FFFF"></div><div style="left:66px;top:120px;width:204px;height:24px;background:#FFFF00"></div><div style="left:6px;top:168px;width:24px;height:24px;background:#FFFF00"></div><div style="left:42px;top:168px;width:276px;height:24px;background:#FFFF00"></div><div style="left:6px;top:192px;width:48px;height:24px;background:#00FFFF"></div><div style="left:318px;top:240px;width:204px;height:24px;background:#FFFF00"></div><div style="left:6px;top:408px;width:48px;height:24px;background:#00FFFF"></div><div style="left:66px;top:408px;width:204px;height:24px;background:#FFFF00"></div><div style="left:6px;top:504px;width:48px;height:24px;background:#00FFFF"></div><div style="left:66px;top:504px;width:204px;height:24px;background:#FFFF00"></div><div style="left:318px;top:576px;width:204px;height:24px;background:#FFFF00"></div><div style="left:318px;top:600px;width:204px;height:24px;background:#FFFF00"></div><div style="left:66px;top:624px;width:204px;height:24px;background:#FFFF00"></div><div style="left:6px;top:648px;width:48px;height:24px;background:#00FFFF"></div><div style="left:66px;top:648px;width:204px;height:24px;background:#FFFF00"></div><div class="t" style="left:6px;top:0px"><span style="color:#0000FF;">PUSH</span> <span style="color:#808000;">0</span></div><div class="t" style="left:6px;top:24px"><span style="color:#000;background:#00FFFF;">CALL</span> <span style="color:#000;background:#FFFF00;">CRACKME_.00401506</span></div><div class="t" style="left:6px;top:48px"><span style="color:#000;">MOV</span> <span style="color:#000080;">DWORD PTR DS:[4020CA],</span><span style="color:#000;">EAX</span></div><div class="t" style="left:6px;top:72px"><span style="color:#0000FF;">PUSH</span> <span style="color:#808000;">0</span></div><div class="t" style="left:6px;top:96px"><span style="color:#0000FF;">PUSH</span> <span style="color:#000;background:#FFFF00;">CRACKME_.004020F4</span></div><div class="t" style="left:6px;top:120px"><span style="color:#000;background:#00FFFF;">CALL</span> <span style="color:#000;background:#FFFF00;">CRACKME_.004014BE</span></div><div class="t" style="left:6px;top:144px"><span style="color:#000;">OR EAX,EAX</span></div><div class="t" style="left:6px;top:168px"><span style="color:#FF0000;background:#FFFF00;">JE</span> <span style="color:#000;background:#FFFF00;">SHORT CRACKME_.0040101D</span></div><div class="t" style="left:6px;top:192px"><span style="color:#000;background:#00FFFF;">RETN</span></div><div class="t" style="left:6px;top:216px"><span style="color:#000;">MOV</span> <span style="color:#000080;">DWORD PTR DS:[402064],</span><span style="color:#808000;">4003</span></div><div class="t" style="left:6px;top:240px"><span style="color:#000;">MOV</span> <span style="color:#000080;">DWORD PTR DS:[402068],</span><span style="color:#000;background:#FFFF00;">CRACKME_.00401024</span></div><div class="t" style="left:6px;top:264px"><span style="color:#000;">MOV</span> <span style="color:#000080;">DWORD PTR DS:[40206C],</span><span style="color:#808000;">0</span></div><div class="t" style="left:6px;top:288px"><span style="color:#000;">MOV</span> <span style="color:#000080;">DWORD PTR DS:[402070],</span><span style="color:#808000;">0</span></div><div class="t" style="left:6px;top:312px"><span style="color:#000;">MOV</span> <span style="color:#000;">EAX</span><span style="color:#000080;">,DWORD PTR DS:[4020CA]</span></div><div class="t" style="left:6px;top:336px"><span style="color:#000;">MOV</span> <span style="color:#000080;">DWORD PTR DS:[402074],</span><span style="color:#000;">EAX</span></div><div class="t" style="left:6px;top:360px"><span style="color:#0000FF;">PUSH</span> <span style="color:#808000;">64</span></div><div class="t" style="left:6px;top:384px"><span style="color:#0000FF;">PUSH</span> <span style="color:#000;">EAX</span></div><div class="t" style="left:6px;top:408px"><span style="color:#000;background:#00FFFF;">CALL</span> <span style="color:#000;background:#FFFF00;">CRACKME_.00401428</span></div><div class="t" style="left:6px;top:432px"><span style="color:#000;">MOV</span> <span style="color:#000080;">DWORD PTR DS:[402078],</span><span style="color:#000;">EAX</span></div><div class="t" style="left:6px;top:456px"><span style="color:#0000FF;">PUSH</span> <span style="color:#808000;">7F00</span></div><div class="t" style="left:6px;top:480px"><span style="color:#0000FF;">PUSH</span> <span style="color:#808000;">0</span></div><div class="t" style="left:6px;top:504px"><span style="color:#000;background:#00FFFF;">CALL</span> <span style="color:#000;background:#FFFF00;">CRACKME_.0040140A</span></div><div class="t" style="left:6px;top:528px"><span style="color:#000;">MOV</span> <span style="color:#000080;">DWORD PTR DS:[40207C],</span><span style="color:#000;">EAX</span></div><div class="t" style="left:6px;top:552px"><span style="color:#000;">MOV</span> <span style="color:#000080;">DWORD PTR DS:[402080],</span><span style="color:#808000;">5</span></div><div class="t" style="left:6px;top:576px"><span style="color:#000;">MOV</span> <span style="color:#000080;">DWORD PTR DS:[402084],</span><span style="color:#000;background:#FFFF00;">CRACKME_.0040201F</span></div><div class="t" style="left:6px;top:600px"><span style="color:#000;">MOV</span> <span style="color:#000080;">DWORD PTR DS:[402088],</span><span style="color:#000;background:#FFFF00;">CRACKME_.004020F4</span></div><div class="t" style="left:6px;top:624px"><span style="color:#0000FF;">PUSH</span> <span style="color:#000;background:#FFFF00;">CRACKME_.00402064</span></div><div class="t" style="left:6px;top:648px"><span style="color:#000;background:#00FFFF;">CALL</span> <span style="color:#000;background:#FFFF00;">CRACKME_.00401488</span></div><div class="t" style="left:6px;top:672px"><span style="color:#0000FF;">PUSH</span> <span style="color:#808000;">0</span></div><div class="t" style="left:6px;top:696px"><span style="color:#0000FF;">PUSH</span> <span style="color:#000080;">DWORD PTR DS:[4020CA]</span></div><div class="t" style="left:6px;top:720px"><span style="color:#0000FF;">PUSH</span> <span style="color:#808000;">0</span></div><div class="t" style="left:6px;top:744px"><span style="color:#0000FF;">PUSH</span> <span style="color:#808000;">0</span></div></div><div class="clip" style="left:794px;top:176px;width:770px;height:770px"><div class="t" style="left:6px;top:24px"><span style="color:#000;">JMP <span class="c">到</span> kernel32.GetModuleHandleA</span></div><div class="t" style="left:6px;top:96px"><span style="color:#000;">ASCII “No need to disasm the code!”</span></div><div class="t" style="left:6px;top:120px"><span style="color:#000;">JMP <span class="c">到</span> USER32.FindWindowA</span></div><div class="t" style="left:6px;top:408px"><span style="color:#000;">JMP <span class="c">到</span> USER32.LoadIconA</span></div><div class="t" style="left:6px;top:504px"><span style="color:#000;">JMP <span class="c">到</span> USER32.LoadCursorA</span></div><div class="t" style="left:6px;top:576px"><span style="color:#000;">ASCII “MENU”</span></div><div class="t" style="left:6px;top:600px"><span style="color:#000;">ASCII “No need to disasm the code!”</span></div><div class="t" style="left:6px;top:648px"><span style="color:#000;">JMP <span class="c">到</span> USER32.RegisterClassA</span></div></div><div style="left:0px;top:950px;width:2px;height:100px;background:#808080"></div><div style="left:0px;top:1046px;width:2396px;height:4px;background:#808080"></div><div class="t" style="left:8px;top:950px"><span style="color:#000;">00401506=CRACKME_.00401506</span></div><div style="left:1602px;top:140px;width:794px;height:4px;background:#808080"></div><div style="left:1598px;top:950px;width:4px;height:100px;background:#808080"></div><div style="left:2394px;top:140px;width:2px;height:910px;background:#808080"></div><div style="left:1602px;top:144px;width:792px;height:32px;background:#C0C0C0"></div><div style="left:1602px;top:144px;width:792px;height:2px;background:#fff"></div><div style="left:1602px;top:172px;width:792px;height:2px;background:#808080"></div><div style="left:1602px;top:174px;width:792px;height:2px;background:#000"></div><div style="left:1602px;top:144px;width:2px;height:30px;background:#fff"></div><div class="t" style="left:1609px;top:149px"><span class="c">寄存器</span> (FPU)</div><div style="left:2053px;top:150px;width:12px;height:20px"><svg width="12" height="20" viewBox="0 0 12 20"><path d="M11 1 L2 10 L11 19" fill="none" stroke="#000" stroke-width="2"/></svg></div><div style="left:2113px;top:150px;width:12px;height:20px"><svg width="12" height="20" viewBox="0 0 12 20"><path d="M11 1 L2 10 L11 19" fill="none" stroke="#000" stroke-width="2"/></svg></div><div style="left:2173px;top:150px;width:12px;height:20px"><svg width="12" height="20" viewBox="0 0 12 20"><path d="M11 1 L2 10 L11 19" fill="none" stroke="#000" stroke-width="2"/></svg></div><div style="left:2233px;top:150px;width:12px;height:20px"><svg width="12" height="20" viewBox="0 0 12 20"><path d="M11 1 L2 10 L11 19" fill="none" stroke="#000" stroke-width="2"/></svg></div><div style="left:2293px;top:150px;width:12px;height:20px"><svg width="12" height="20" viewBox="0 0 12 20"><path d="M11 1 L2 10 L11 19" fill="none" stroke="#000" stroke-width="2"/></svg></div><div style="left:2353px;top:150px;width:12px;height:20px"><svg width="12" height="20" viewBox="0 0 12 20"><path d="M11 1 L2 10 L11 19" fill="none" stroke="#000" stroke-width="2"/></svg></div><div style="left:1650px;top:272px;width:108px;height:24px;background:#C0C0C0"></div><div class="t" style="left:1608px;top:176px"><span style="color:#808080;">EAX 00000000</span></div><div class="t" style="left:1608px;top:200px"><span style="color:#808080;">ECX 0012FFB0</span></div><div class="t" style="left:1608px;top:224px"><span style="color:#808080;">EDX 7C92E514 ntdll.KiFastSystemCallRet</span></div><div class="t" style="left:1608px;top:248px"><span style="color:#808080;">EBX 7FFDE000</span></div><div class="t" style="left:1608px;top:296px"><span style="color:#808080;">EBP 0012FFF0</span></div><div class="t" style="left:1608px;top:320px"><span style="color:#808080;">ESI FFFFFFFF</span></div><div class="t" style="left:1608px;top:344px"><span style="color:#808080;">EDI 7C930228 ntdll.7C930228</span></div><div class="t" style="left:1608px;top:416px"><span style="color:#808080;">C 0  ES 0023 32<span class="c">位</span> 0(FFFFFFFF)</span></div><div class="t" style="left:1608px;top:440px"><span style="color:#808080;">P 1  CS 001B 32<span class="c">位</span> 0(FFFFFFFF)</span></div><div class="t" style="left:1608px;top:464px"><span style="color:#808080;">A 0  SS 0023 32<span class="c">位</span> 0(FFFFFFFF)</span></div><div class="t" style="left:1608px;top:488px"><span style="color:#808080;">Z 1  DS 0023 32<span class="c">位</span> 0(FFFFFFFF)</span></div><div class="t" style="left:1608px;top:512px"><span style="color:#808080;">S 0  FS 003B 32<span class="c">位</span> 7FFDD000(FFF)</span></div><div class="t" style="left:1608px;top:536px"><span style="color:#808080;">T 0  GS 0000 NULL</span></div><div class="t" style="left:1608px;top:560px"><span style="color:#808080;">D 0</span></div><div class="t" style="left:1608px;top:584px"><span style="color:#808080;">O 0  LastErr ERROR_MOD_NOT_FOUND (0000007E)</span></div><div class="t" style="left:1608px;top:620px"><span style="color:#808080;">EFL 00000246 (NO,NB,E,BE,NS,PE,GE,LE)</span></div><div class="t" style="left:1608px;top:656px"><span style="color:#808080;">ST0 empty -UNORM BBB0 01050104 00000000</span></div><div class="t" style="left:1608px;top:680px"><span style="color:#808080;">ST1 empty 0.0</span></div><div class="t" style="left:1608px;top:704px"><span style="color:#808080;">ST2 empty 0.0</span></div><div class="t" style="left:1608px;top:728px"><span style="color:#808080;">ST3 empty 0.0</span></div><div class="t" style="left:1608px;top:752px"><span style="color:#808080;">ST4 empty 0.0</span></div><div class="t" style="left:1608px;top:776px"><span style="color:#808080;">ST5 empty 0.0</span></div><div class="t" style="left:1608px;top:800px"><span style="color:#808080;">ST6 empty 1.0000000000000000000</span></div><div class="t" style="left:1608px;top:824px"><span style="color:#808080;">ST7 empty 1.0000000000000000000</span></div><div class="t" style="left:1608px;top:848px"><span style="color:#808080;">               3 2 1 0      E S P U O Z D I</span></div><div class="t" style="left:1608px;top:872px"><span style="color:#808080;">FST 4020  Cond 1 0 0 0  Err 0 0 1 0 0 0 0 0  (EQ)</span></div><div class="t" style="left:1608px;top:896px"><span style="color:#808080;">FCW 027F  Prec NEAR,53  <span class="c">掩码</span>    1 1 1 1 1 1</span></div><div class="t" style="left:1608px;top:272px"><span style="color:#808080;">ESP </span><span style="color:#FF0000;">0012FFC0</span></div><div class="t" style="left:1608px;top:380px"><span style="color:#808080;">EIP </span><span style="color:#FF0000;">00401002</span><span style="color:#808080;"> CRACKME_.00401002</span></div><div style="left:0px;top:1050px;width:2px;height:302px;background:#808080"></div><div style="left:0px;top:1348px;width:1372px;height:4px;background:#808080"></div><div style="left:2px;top:1050px;width:1332px;height:32px;background:#C0C0C0"></div><div style="left:2px;top:1050px;width:1332px;height:2px;background:#fff"></div><div style="left:2px;top:1078px;width:1332px;height:2px;background:#808080"></div><div style="left:2px;top:1080px;width:1332px;height:2px;background:#000"></div><div style="left:2px;top:1050px;width:2px;height:30px;background:#fff"></div><div class="t" style="left:9px;top:1055px"><span class="c">地址</span></div><div style="left:106px;top:1052px;width:2px;height:28px;background:#808080"></div><div style="left:108px;top:1050px;width:2px;height:32px;background:#000"></div><div class="t" style="left:117px;top:1055px">HEX <span class="c">数据</span></div><div style="left:682px;top:1052px;width:2px;height:28px;background:#808080"></div><div style="left:684px;top:1050px;width:2px;height:32px;background:#000"></div><div class="t" style="left:693px;top:1055px">ASCII</div><div style="left:886px;top:1052px;width:2px;height:28px;background:#808080"></div><div style="left:888px;top:1050px;width:2px;height:32px;background:#000"></div><div style="left:108px;top:1082px;width:2px;height:266px;background:#808080"></div><div style="left:252px;top:1082px;width:2px;height:266px;background:#C0C0C0"></div><div style="left:396px;top:1082px;width:2px;height:266px;background:#C0C0C0"></div><div style="left:540px;top:1082px;width:2px;height:266px;background:#C0C0C0"></div><div style="left:684px;top:1082px;width:2px;height:266px;background:#808080"></div><div style="left:888px;top:1082px;width:2px;height:266px;background:#808080"></div><div style="left:1334px;top:1050px;width:34px;height:298px;background:linear-gradient(to right,#EEEDE6 0,#F6F5F1 50%,#FDFDFA 100%)"></div><div style="left:1334px;top:1050px;width:34px;height:34px;background:linear-gradient(to bottom,#E6E8FD 0,#E2E6FC 58%,#BACCF9 62%,#B2C6F8 100%);border:2px solid #78A0F8;box-shadow:inset 0 0 0 2px #FAFBFF"></div><div style="left:1340px;top:1058px;width:22px;height:17px"><svg width="22" height="17" viewBox="0 0 22 17"><path d="M4 12 L11 5 L18 12" fill="none" stroke="#2A52B0" stroke-width="4" stroke-linecap="square"/></svg></div><div style="left:1334px;top:1084px;width:34px;height:34px;background:linear-gradient(to bottom,#E6E8FD 0,#E2E6FC 58%,#BACCF9 62%,#B2C6F8 100%);border:2px solid #78A0F8;box-shadow:inset 0 0 0 2px #FAFBFF"></div><div style="left:1344px;top:1092px;width:14px;height:16px"><svg width="14" height="16" viewBox="0 0 14 16"><rect x="0" y="0" width="12" height="2" fill="#fff"/><rect x="2" y="2" width="12" height="2" fill="#3A74F0"/><rect x="0" y="4" width="12" height="2" fill="#fff"/><rect x="2" y="6" width="12" height="2" fill="#3A74F0"/><rect x="0" y="8" width="12" height="2" fill="#fff"/><rect x="2" y="10" width="12" height="2" fill="#3A74F0"/><rect x="0" y="12" width="12" height="2" fill="#fff"/><rect x="2" y="14" width="12" height="2" fill="#3A74F0"/></svg></div><div style="left:1334px;top:1314px;width:34px;height:34px;background:linear-gradient(to bottom,#E6E8FD 0,#E2E6FC 58%,#BACCF9 62%,#B2C6F8 100%);border:2px solid #78A0F8;box-shadow:inset 0 0 0 2px #FAFBFF"></div><div style="left:1340px;top:1323px;width:22px;height:17px"><svg width="22" height="17" viewBox="0 0 22 17"><path d="M4 5 L11 12 L18 5" fill="none" stroke="#2A52B0" stroke-width="4" stroke-linecap="square"/></svg></div><div class="clip" style="left:2px;top:1082px;width:1332px;height:266px"><div class="t" style="left:6px;top:0px"><span style="color:#808080;">0040A000</span></div><div class="t" style="left:114px;top:0px"><span style="color:#808080;">00 00 00 00 E2 4F A8 34 00 00 00 00 00 00 05 00</span></div><div class="clip" style="left:686px;top:0px;width:202px;height:24px"><div class="t" style="left:4px;top:0px"><span style="color:#808080;">....<span class="c">鈫</span>?......<span class="sq"></span>.</span></div></div><div class="t" style="left:6px;top:24px"><span style="color:#808080;">0040A010</span></div><div class="t" style="left:114px;top:24px"><span style="color:#808080;">02 00 00 00 38 00 00 80 03 00 00 00 78 00 00 80</span></div><div class="clip" style="left:686px;top:24px;width:202px;height:24px"><div class="t" style="left:4px;top:0px"><span style="color:#808080;"><span class="sq"></span>...8..€<span class="sq"></span>...x..</span></div></div><div class="t" style="left:6px;top:48px"><span style="color:#808080;">0040A020</span></div><div class="t" style="left:114px;top:48px"><span style="color:#808080;">04 00 00 00 B8 00 00 80 05 00 00 00 F8 00 00 80</span></div><div class="clip" style="left:686px;top:48px;width:202px;height:24px"><div class="t" style="left:4px;top:0px"><span style="color:#808080;"><span class="sq"></span>...?.€<span class="sq"></span>...?.€</span></div></div><div class="t" style="left:6px;top:72px"><span style="color:#808080;">0040A030</span></div><div class="t" style="left:114px;top:72px"><span style="color:#808080;">0E 00 00 00 68 01 00 80 00 00 00 00 E2 4F A8 34</span></div><div class="clip" style="left:686px;top:72px;width:202px;height:24px"><div class="t" style="left:4px;top:0px"><span style="color:#808080;"><span class="sq"></span>...h<span class="sq"></span>.€....<span class="c">鈫</span>?</span></div></div><div class="t" style="left:6px;top:96px"><span style="color:#808080;">0040A040</span></div><div class="t" style="left:114px;top:96px"><span style="color:#808080;">00 00 00 00 00 00 01 00 E7 03 00 00 50 00 00 80</span></div><div class="clip" style="left:686px;top:96px;width:202px;height:24px"><div class="t" style="left:4px;top:0px"><span style="color:#808080;">......<span class="sq"></span>.?..P..€</span></div></div><div class="t" style="left:6px;top:120px"><span style="color:#808080;">0040A050</span></div><div class="t" style="left:114px;top:120px"><span style="color:#808080;">00 00 00 00 E2 4F A8 34 00 00 00 00 00 00 01 00</span></div><div class="clip" style="left:686px;top:120px;width:202px;height:24px"><div class="t" style="left:4px;top:0px"><span style="color:#808080;">....<span class="c">鈫</span>?......<span class="sq"></span>.</span></div></div><div class="t" style="left:6px;top:144px"><span style="color:#808080;">0040A060</span></div><div class="t" style="left:114px;top:144px"><span style="color:#808080;">00 00 00 00 68 00 00 00 DC 61 00 00 E8 0A 00 00</span></div><div class="clip" style="left:686px;top:144px;width:202px;height:24px"><div class="t" style="left:4px;top:0px"><span style="color:#808080;">....h...<span class="c">靊</span>..?..</span></div></div><div class="t" style="left:6px;top:168px"><span style="color:#808080;">0040A070</span></div><div class="t" style="left:114px;top:168px"><span style="color:#808080;">00 00 00 00 00 00 00 00 00 00 00 00 E2 4F A8 34</span></div><div class="clip" style="left:686px;top:168px;width:202px;height:24px"><div class="t" style="left:4px;top:0px"><span style="color:#808080;">............<span class="c">鈫</span>?</span></div></div><div class="t" style="left:6px;top:192px"><span style="color:#808080;">0040A080</span></div><div class="t" style="left:114px;top:192px"><span style="color:#808080;">00 00 00 00 00 00 01 00 01 00 00 00 90 00 00 80</span></div><div class="clip" style="left:686px;top:192px;width:202px;height:24px"><div class="t" style="left:4px;top:0px"><span style="color:#808080;">......<span class="sq"></span>.<span class="sq"></span>...?.€</span></div></div><div class="t" style="left:6px;top:216px"><span style="color:#808080;">0040A090</span></div><div class="t" style="left:114px;top:216px"><span style="color:#808080;">00 00 00 00 E2 4F A8 34 00 00 00 00 00 00 01 00</span></div><div class="clip" style="left:686px;top:216px;width:202px;height:24px"><div class="t" style="left:4px;top:0px"><span style="color:#808080;">....<span class="c">鈫</span>?......<span class="sq"></span>.</span></div></div><div class="t" style="left:6px;top:240px"><span style="color:#808080;">0040A0A0</span></div><div class="t" style="left:114px;top:240px"><span style="color:#808080;">00 00 00 00 A8 00 00 00 E0 A1 00 00 E8 02 00 00</span></div><div class="clip" style="left:686px;top:240px;width:202px;height:24px"><div class="t" style="left:4px;top:0px"><span style="color:#808080;">....?..<span class="c">嗜</span>..?..</span></div></div></div><div style="left:1368px;top:1050px;width:4px;height:302px;background:#808080"></div><div style="left:1372px;top:1348px;width:1024px;height:4px;background:#808080"></div><div style="left:2394px;top:1050px;width:2px;height:302px;background:#808080"></div><div style="left:1478px;top:1050px;width:2px;height:298px;background:#808080"></div><div style="left:1598px;top:1050px;width:2px;height:298px;background:#808080"></div><div style="left:1480px;top:1050px;width:880px;height:24px;background:#C0C0C0"></div><div style="left:1372px;top:1050px;width:106px;height:24px;background:#000"></div><div style="left:2360px;top:1050px;width:34px;height:298px;background:linear-gradient(to right,#EEEDE6 0,#F6F5F1 50%,#FDFDFA 100%)"></div><div style="left:2360px;top:1050px;width:34px;height:34px;background:linear-gradient(to bottom,#E6E8FD 0,#E2E6FC 58%,#BACCF9 62%,#B2C6F8 100%);border:2px solid #78A0F8;box-shadow:inset 0 0 0 2px #FAFBFF"></div><div style="left:2366px;top:1058px;width:22px;height:17px"><svg width="22" height="17" viewBox="0 0 22 17"><path d="M4 12 L11 5 L18 12" fill="none" stroke="#2A52B0" stroke-width="4" stroke-linecap="square"/></svg></div><div style="left:2360px;top:1280px;width:34px;height:34px;background:linear-gradient(to bottom,#E6E8FD 0,#E2E6FC 58%,#BACCF9 62%,#B2C6F8 100%);border:2px solid #78A0F8;box-shadow:inset 0 0 0 2px #FAFBFF"></div><div style="left:2370px;top:1288px;width:14px;height:16px"><svg width="14" height="16" viewBox="0 0 14 16"><rect x="0" y="0" width="12" height="2" fill="#fff"/><rect x="2" y="2" width="12" height="2" fill="#3A74F0"/><rect x="0" y="4" width="12" height="2" fill="#fff"/><rect x="2" y="6" width="12" height="2" fill="#3A74F0"/><rect x="0" y="8" width="12" height="2" fill="#fff"/><rect x="2" y="10" width="12" height="2" fill="#3A74F0"/><rect x="0" y="12" width="12" height="2" fill="#fff"/><rect x="2" y="14" width="12" height="2" fill="#3A74F0"/></svg></div><div style="left:2360px;top:1314px;width:34px;height:34px;background:linear-gradient(to bottom,#E6E8FD 0,#E2E6FC 58%,#BACCF9 62%,#B2C6F8 100%);border:2px solid #78A0F8;box-shadow:inset 0 0 0 2px #FAFBFF"></div><div style="left:2366px;top:1323px;width:22px;height:17px"><svg width="22" height="17" viewBox="0 0 22 17"><path d="M4 5 L11 12 L18 5" fill="none" stroke="#2A52B0" stroke-width="4" stroke-linecap="square"/></svg></div><div class="clip" style="left:1372px;top:1050px;width:988px;height:298px"><div class="t" style="left:6px;top:0px"><span style="color:#fff;">0012FFC0</span></div><div class="t" style="left:126px;top:0px"><span style="color:#808080;">00000000</span></div><div class="t" style="left:6px;top:24px"><span style="color:#808080;">0012FFC4</span></div><div class="t" style="left:126px;top:24px"><span style="color:#808080;">7C81776F</span></div><div class="t" style="left:234px;top:24px"><span style="color:#808080;"><span class="c">返回到</span> kernel32.7C81776F</span></div><div class="t" style="left:6px;top:48px"><span style="color:#808080;">0012FFC8</span></div><div class="t" style="left:126px;top:48px"><span style="color:#808080;">7C930228</span></div><div class="t" style="left:234px;top:48px"><span style="color:#808080;">ntdll.7C930228</span></div><div class="t" style="left:6px;top:72px"><span style="color:#808080;">0012FFCC</span></div><div class="t" style="left:126px;top:72px"><span style="color:#808080;">FFFFFFFF</span></div><div class="t" style="left:6px;top:96px"><span style="color:#808080;">0012FFD0</span></div><div class="t" style="left:126px;top:96px"><span style="color:#808080;">7FFDE000</span></div><div class="t" style="left:6px;top:120px"><span style="color:#808080;">0012FFD4</span></div><div class="t" style="left:126px;top:120px"><span style="color:#808080;">80545DFD</span></div><div class="t" style="left:6px;top:144px"><span style="color:#808080;">0012FFD8</span></div><div class="t" style="left:126px;top:144px"><span style="color:#808080;">0012FFC8</span></div><div class="t" style="left:6px;top:168px"><span style="color:#808080;">0012FFDC</span></div><div class="t" style="left:126px;top:168px"><span style="color:#808080;">818A55E8</span></div><div class="t" style="left:6px;top:192px"><span style="color:#808080;">0012FFE0</span></div><div class="t" style="left:126px;top:192px"><span style="color:#808080;">FFFFFFFF</span></div><div class="t" style="left:234px;top:192px"><span style="color:#808080;">SEH <span class="c">链尾部</span></span></div><div class="t" style="left:6px;top:216px"><span style="color:#808080;">0012FFE4</span></div><div class="t" style="left:126px;top:216px"><span style="color:#808080;">7C839A90</span></div><div class="t" style="left:234px;top:216px"><span style="color:#808080;">SE<span class="c">处理程序</span></span></div><div class="t" style="left:6px;top:240px"><span style="color:#808080;">0012FFE8</span></div><div class="t" style="left:126px;top:240px"><span style="color:#808080;">7C817778</span></div><div class="t" style="left:234px;top:240px"><span style="color:#808080;">kernel32.7C817778</span></div><div class="t" style="left:6px;top:264px"><span style="color:#808080;">0012FFEC</span></div><div class="t" style="left:126px;top:264px"><span style="color:#808080;">00000000</span></div><div class="t" style="left:6px;top:288px"><span style="color:#808080;">0012FFF0</span></div><div class="t" style="left:126px;top:288px"><span style="color:#808080;">00000000</span></div></div><div style="left:1606px;top:1052px;width:12px;height:20px"><svg width="12" height="20" viewBox="0 0 12 20"><path d="M2 0 V17 H12" fill="none" stroke="#000" stroke-width="3"/></svg></div><div class="t" style="left:1618px;top:1050px"><span style="color:#808080;">pModule = NULL</span></div><div style="left:0px;top:1352px;width:2396px;height:50px;background:#ECE9D8"></div><div class="ui" style="left:8px;top:1362px;height:30px;line-height:30px;font-size:23px;color:#000">命令</div><div style="left:75px;top:1369px;width:5px;height:5px;background:#000"></div><div style="left:75px;top:1381px;width:5px;height:5px;background:#000"></div><div style="left:122px;top:1358px;width:400px;height:40px;background:#fff;border-top:2px solid #ACA899;border-left:2px solid #ACA899;border-bottom:2px solid #fff;border-right:2px solid #fff"></div><div style="left:124px;top:1360px;width:396px;height:36px;border-top:2px solid #716F64;border-left:2px solid #716F64;border-bottom:2px solid #F1EFE2;border-right:2px solid #F1EFE2"></div><div class="t" style="left:128px;top:1364px"><span style="color:#000;">HR 0012FFC0</span></div><div style="left:484px;top:1362px;width:34px;height:32px;background:#ECE9D8;border-top:2px solid #fff;border-left:2px solid #fff;border-right:2px solid #716F64;border-bottom:2px solid #716F64;box-shadow:inset -2px -2px 0 #ACA899"></div><div style="left:491px;top:1373px;width:16px;height:10px"><svg width="16" height="10" viewBox="0 0 16 10"><path d="M1 1 H15 L8 9 Z" fill="#000"/></svg></div><div style="left:528px;top:1358px;width:1866px;height:38px;background:#ECE9D8;border-top:2px solid #ACA899;border-left:2px solid #ACA899;border-bottom:2px solid #fff;border-right:2px solid #fff"></div><div style="left:0px;top:1402px;width:2396px;height:2px;background:#fff"></div><div style="left:0px;top:1404px;width:2396px;height:38px;background:#C8C8C8"></div><div style="left:0px;top:1442px;width:2396px;height:2px;background:#1A2A6A"></div><div style="left:0px;top:1406px;width:2128px;height:34px;background:#C0C0C0;border-top:2px solid #808080;border-left:2px solid #808080;border-right:2px solid #fff;border-bottom:2px solid #fff"></div><div style="left:2130px;top:1406px;width:82px;height:34px;background:#C0C0C0;border-top:2px solid #808080;border-left:2px solid #808080;border-right:2px solid #fff;border-bottom:2px solid #fff"></div><div style="left:2214px;top:1406px;width:182px;height:34px;background:#C0C0C0;border-top:2px solid #808080;border-left:2px solid #808080;border-right:2px solid #fff;border-bottom:2px solid #fff"></div><div style="left:2216px;top:1408px;width:180px;height:30px;background:#FFFF33"></div><div class="ui" style="left:2221px;top:1407px;height:32px;line-height:32px;font-size:26px;color:#FF0000">暂停</div><div style="left:0;top:0;width:2396px;height:1444px;pointer-events:none"><svg width="2396" height="1444" viewBox="0 0 2396 1444">
<rect x="8" y="174" width="826" height="25" fill="none" stroke="#ED1C24" stroke-width="4"/>
<rect x="1370" y="1022" width="112" height="56" fill="none" stroke="#ED1C24" stroke-width="4"/>
<line x1="840" y1="204" x2="1376" y2="998" stroke="#ED1C24" stroke-width="5.5" stroke-linecap="round"/>
<path d="M1386 1014 L1367 1002 L1383 991 Z" fill="#ED1C24"/>
</svg></div></body></html>
